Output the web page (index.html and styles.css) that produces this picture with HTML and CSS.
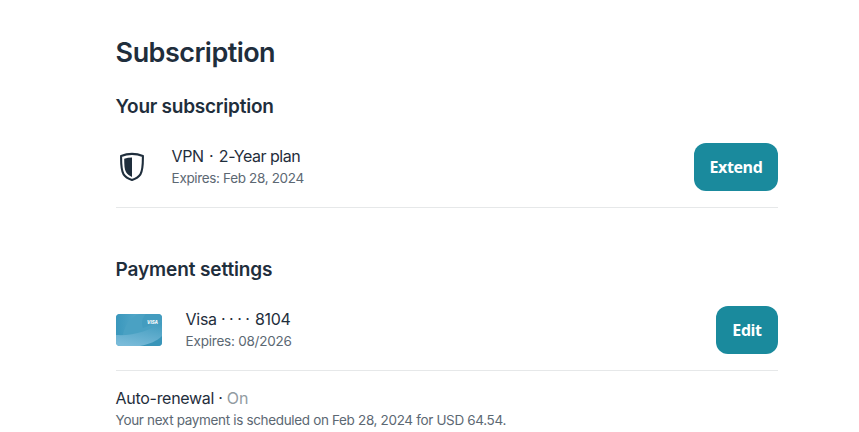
FILE: index.html
```html
<!DOCTYPE html>
<html lang="en">
<head>
<meta charset="utf-8">
<title>Subscription</title>
<link rel="stylesheet" href="styles.css">
</head>
<body>
<main class="page">
  <h1 class="title">Subscription</h1>
  <section class="section">
    <h2 class="heading heading-plan">Your subscription</h2>
    <div class="row">
      <svg class="shield" width="32" height="32" viewBox="0 0 32 32" aria-hidden="true">
        <path d="M16 2.9C12.2 2.9 8.5 3.6 5.1 4.9C5.1 13.7 4.9 19.2 7.6 23.3C9.5 26.2 12.7 27.8 16 28.9C19.3 27.8 22.5 26.2 24.4 23.3C27.1 19.2 26.9 13.7 26.9 4.9C23.5 3.6 19.8 2.9 16 2.9Z" fill="none" stroke="#1f2e3c" stroke-width="2.1" stroke-linejoin="round"/>
        <path d="M16 6.4V26C13.6 24.8 11.4 23.3 10.1 21.2C8.3 18.2 8.3 13.7 8.2 7.7C10.7 6.9 13.3 6.4 16 6.4Z" fill="#1f2e3c"/>
      </svg>
      <div class="info">
        <p class="name plan-name">VPN <span class="separator">·</span> 2-Year plan</p>
        <p class="detail">Expires: Feb 28, 2024</p>
      </div>
      <button class="button extend" type="button">Extend</button>
    </div>
  </section>
  <section class="section payment">
    <h2 class="heading heading-payment">Payment settings</h2>
    <div class="row">
      <svg class="card" width="46" height="32" viewBox="0 0 46 32" aria-hidden="true">
        <defs>
          <clipPath id="card-shape"><rect width="46" height="32" rx="4"/></clipPath>
          <linearGradient id="upper" x1="0" y1="0" x2="1" y2="0"><stop offset="0" stop-color="#3a97bc"/><stop offset="1" stop-color="#54a8c9"/></linearGradient>
          <linearGradient id="lower" x1="0.3" y1="1" x2="0.7" y2="0"><stop offset="0" stop-color="#7abbd9"/><stop offset="1" stop-color="#429cbf"/></linearGradient>
        </defs>
        <g clip-path="url(#card-shape)">
          <rect width="46" height="32" fill="#4aa1c3"/>
          <path d="M0 0H23C14 3 9 11 7 21H0Z" fill="url(#upper)"/>
          <path d="M30 0H46V7L27 14C25 9 26 4 30 0Z" fill="#439cbf"/>
          <path d="M0 21C17 22 35 17 46 7V32H0Z" fill="url(#lower)"/>
          <path d="M24 32C34 30 41 27 46 22V32Z" fill="#3995b9"/>
          <text class="card-brand" x="31" y="9.5" textLength="11" lengthAdjust="spacingAndGlyphs">VISA</text>
        </g>
      </svg>
      <div class="info">
        <p class="name card-name">Visa <span class="dots">····</span> 8104</p>
        <p class="detail card-detail">Expires: 08/2026</p>
      </div>
      <button class="button edit" type="button">Edit</button>
    </div>
    <div class="renewal">
      <p class="name">Auto-renewal · <span class="status">On</span></p>
      <p class="detail">Your next payment is scheduled on Feb 28, 2024 for USD 64.54.</p>
    </div>
  </section>
</main>
</body>
</html>
```
FILE: styles.css
```css
* { box-sizing: border-box; }
body { margin: 0; background: #fff; color: #1f2e3c; font-family: Inter, "Liberation Sans", sans-serif; overflow: hidden; }
h1, h2, p { margin: 0; text-indent: -.4px; white-space: nowrap; }
.page { width: 662px; margin-left: 116px; padding-top: 33px; }
.title { font-size: 27px; line-height: 40px; font-weight: 600; letter-spacing: -.54px; }
.section { padding-top: 20px; }
.payment { padding-top: 48px; }
.heading { font-size: 19px; line-height: 28px; font-weight: 600; }
.heading-plan { letter-spacing: -.24px; }
.heading-payment { letter-spacing: -.12px; }
.row { display: flex; align-items: center; height: 87px; padding-top: 6px; border-bottom: 1px solid #e6e8e9; }
.shield, .card { flex: none; }
.info { margin-left: 24px; flex: 1; }
.name { font-size: 16px; line-height: 22px; letter-spacing: -.3px; }
.plan-name { letter-spacing: -.48px; }
.separator { margin: 0 1.6px; }
.card-name { letter-spacing: -.3px; }
.dots { letter-spacing: 3.5px; margin-right: -2.6px; }
.detail { font-size: 13.5px; line-height: 22px; letter-spacing: -.34px; color: #5c6873; }
.card-detail { letter-spacing: -.22px; }
.button { height: 48px; padding: 0; border: 0; border-radius: 12px; background: #1a8a9d; color: #fff; font: 700 16px/24px "Open Sans", sans-serif; letter-spacing: -.4px; }
.extend { width: 84px; }
.edit { width: 62px; }
.renewal { padding-top: 16px; }
.status { color: #929ba2; letter-spacing: 0; }
.card-brand { fill: #f4fafc; font: italic 800 5px Inter, sans-serif; }
```
